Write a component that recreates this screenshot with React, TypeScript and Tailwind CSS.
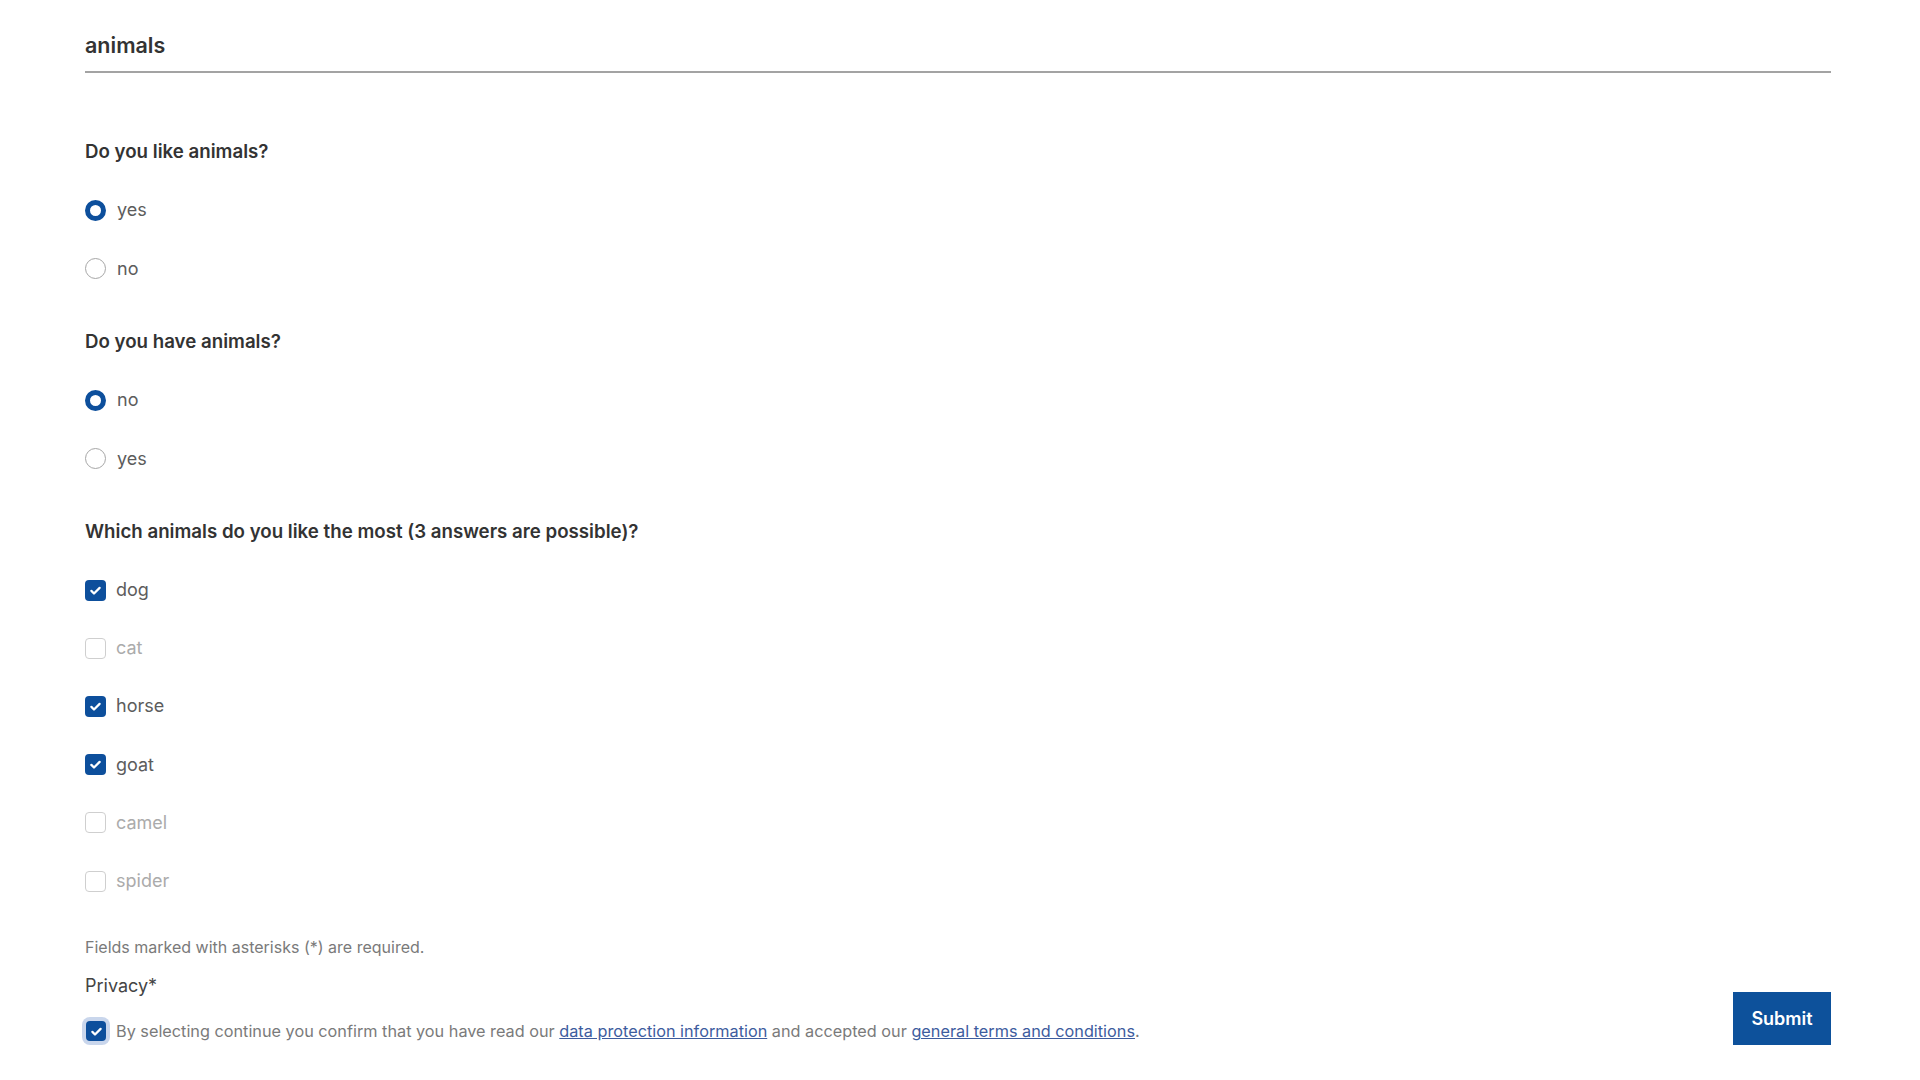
import { useState } from 'react';

const font = { fontFamily: 'Inter, "Noto Sans", sans-serif' };

type Opt = { id: string; label: string };

const likeOpts: Opt[] = [
  { id: 'yes', label: 'yes' },
  { id: 'no', label: 'no' },
];
const haveOpts: Opt[] = [
  { id: 'no', label: 'no' },
  { id: 'yes', label: 'yes' },
];
const animalOpts: Opt[] = [
  { id: 'dog', label: 'dog' },
  { id: 'cat', label: 'cat' },
  { id: 'horse', label: 'horse' },
  { id: 'goat', label: 'goat' },
  { id: 'camel', label: 'camel' },
  { id: 'spider', label: 'spider' },
];

function Check() {
  return (
    <svg viewBox="0 0 20 20" className="w-[15px] h-[15px]" fill="none">
      <path d="M4.5 10.5l3.5 3.5 7.5-7.5" stroke="white" strokeWidth="3" strokeLinecap="round" strokeLinejoin="round" />
    </svg>
  );
}

function RadioGroup({ name, options, value, onChange }: { name: string; options: Opt[]; value: string; onChange: (v: string) => void }) {
  return (
    <div className="flex flex-col mt-[17px]">
      {options.map((o) => (
        <label key={name + o.id} className="h-[58.5px] flex items-center gap-[11px] cursor-pointer" onClick={() => onChange(o.id)}>
          <span
            className={`w-[21px] h-[21px] rounded-full bg-white ${
              value === o.id ? 'border-[5.5px] border-[#0d4f9c]' : 'border-[1.5px] border-[#a6a6a6]'
            }`}
          />
          <span className="text-[18px] leading-6 text-[#5c5c5c]">{o.label}</span>
        </label>
      ))}
    </div>
  );
}

export default function App() {
  const [like, setLike] = useState('yes');
  const [have, setHave] = useState('no');
  const [picked, setPicked] = useState<string[]>(['dog', 'horse', 'goat']);
  const [privacy, setPrivacy] = useState(true);

  const toggle = (id: string) => {
    if (picked.includes(id)) setPicked(picked.filter((p) => p !== id));
    else if (picked.length < 3) setPicked([...picked, id]);
  };
  const full = picked.length >= 3;

  return (
    <div className="min-h-screen bg-white pl-[85px] pr-[89px] pt-[30px]" style={font}>
      {/* Section title */}
      <h1 className="text-[21.5px] leading-[30px] font-semibold text-[#333] pb-[11px] border-b-2 border-[#a3a3a3]">animals</h1>

      {/* Q1 */}
      <div className="mt-[67px]">
        <p className="text-[18.7px] leading-6 font-semibold text-[#333]">Do you like animals?</p>
        <RadioGroup name="like" options={likeOpts} value={like} onChange={setLike} />
      </div>

      {/* Q2 */}
      <div className="mt-[32px]">
        <p className="text-[18.7px] leading-6 font-semibold text-[#333]">Do you have animals?</p>
        <RadioGroup name="have" options={haveOpts} value={have} onChange={setHave} />
      </div>

      {/* Q3 */}
      <div className="mt-[32px]">
        <p className="text-[18.7px] leading-6 font-semibold text-[#333]">Which animals do you like the most (3 answers are possible)?</p>
        <div className="flex flex-col mt-[17px]">
          {animalOpts.map((o) => {
            const on = picked.includes(o.id);
            const dim = !on && full;
            return (
              <label key={o.id} className="h-[58.2px] flex items-center gap-[10px] cursor-pointer" onClick={() => toggle(o.id)}>
                <span
                  className={`w-[21px] h-[21px] rounded-[4px] flex items-center justify-center ${
                    on ? 'bg-[#0d4f9c]' : 'bg-white border-[1.5px] border-[#cfcfcf]'
                  }`}
                >
                  {on && <Check />}
                </span>
                <span className={`text-[18px] leading-6 ${dim ? 'text-[#ababab]' : 'text-[#5c5c5c]'}`}>{o.label}</span>
              </label>
            );
          })}
        </div>
      </div>

      {/* Footer */}
      <div className="flex items-end justify-between mt-[27px]">
        <div className="flex flex-col">
          <p className="text-[16px] leading-5 text-[#7a7a7a]">Fields marked with asterisks (*) are required.</p>
          <p className="text-[18px] leading-6 text-[#444] mt-[17px]">Privacy*</p>
          <div className="flex items-center gap-[10px] mt-[19px] h-[28px]">
            <span
              onClick={() => setPrivacy(!privacy)}
              className={`ml-[1px] w-[20px] h-[20px] rounded-[4px] flex items-center justify-center ring-4 ring-[#c9d6ec] cursor-pointer ${
                privacy ? 'bg-[#0d4f9c]' : 'bg-white border-[1.5px] border-[#cfcfcf]'
              }`}
            >
              {privacy && <Check />}
            </span>
            <p className="text-[16.25px] leading-6 text-[#7a7a7a]">
              By selecting continue you confirm that you have read our{' '}
              <a href="#" className="text-[#3d5c9e] underline">data protection information</a> and accepted our{' '}
              <a href="#" className="text-[#3d5c9e] underline">general terms and conditions</a>.
            </p>
          </div>
        </div>
        <button className="w-[98px] h-[53px] bg-[#0d519b] text-white text-[18px] font-semibold">Submit</button>
      </div>
    </div>
  );
}
